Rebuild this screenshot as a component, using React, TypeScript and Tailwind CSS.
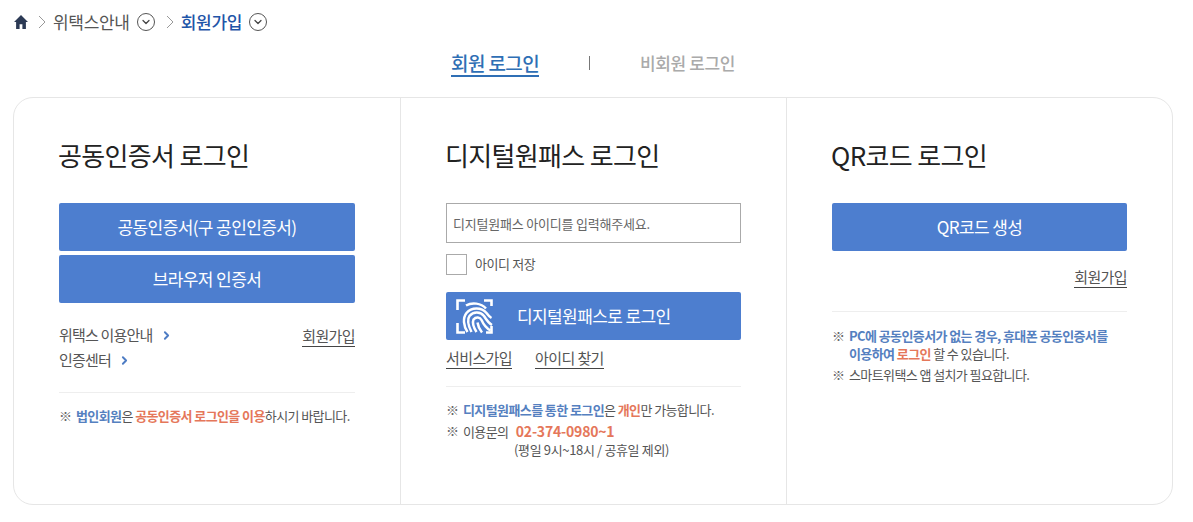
import React from "react";
import { ChevronDown, ChevronRight } from "lucide-react";

const KR = "font-['Noto_Sans_CJK_KR','Noto_Sans',sans-serif]";

const CircleDown = () => (
  <span className="flex h-[18px] w-[18px] items-center justify-center rounded-full border border-[#555]">
    <ChevronDown className="h-3 w-3 text-[#444]" strokeWidth={2.5} />
  </span>
);

const Crumb = () => (
  <svg width="8" height="14" viewBox="0 0 8 14" fill="none" stroke="#999" strokeWidth="1">
    <path d="M1 1l6 6-6 6" />
  </svg>
);

const FingerprintIcon = () => (
  <svg width="37" height="35" viewBox="0 0 37 35" fill="none" stroke="#fff">
    <path d="M9 1.5H1.5V11M28 1.5h7.5V7M1.500 24v9.500H9M35.500 27v6.500H30" strokeWidth="2.600" />
    <g strokeWidth="2.500">
      <path d="M10 6.500c6-3.500 15-2.500 20 3" />
      <path d="M11.500 33c-4-6-5-14-1-19 5-6 15-6 20 0 1.500 2 3 4 5 5" />
      <path d="M15.500 33c-3-6-5-12-2-16 4-5 11-4.500 14.500 0 2.500 4 4.500 7 8 9" />
      <path d="M20.500 33c-2.500-4-4.500-9-3-12.500 2.500-3 6.500-2.500 8 .5 2 4.500 4.500 8 9 10.500" />
      <path d="M26 33.500c-2-2.500-4-6-4.500-10" />
    </g>
  </svg>
);

const Note = ({ children }: { children: React.ReactNode }) => (
  <div className="flex text-[13px] leading-[18px] tracking-[-0.6px] text-[#555]">
    <span className="w-[17px] shrink-0 text-[#666]">※</span>
    <div>{children}</div>
  </div>
);

const Blue = ({ children }: { children: React.ReactNode }) => (
  <b className="font-semibold text-[#5580c0]">{children}</b>
);
const Red = ({ children }: { children: React.ReactNode }) => (
  <b className="font-semibold text-[#e5775a]">{children}</b>
);

const BlueButton = ({ children }: { children: React.ReactNode }) => (
  <button className="flex h-12 w-full items-center justify-center rounded-[2px] bg-[#4d7ecf] text-[17px] tracking-[-0.6px] text-white">
    {children}
  </button>
);

const LinkText = ({ children }: { children: React.ReactNode }) => (
  <a className="border-b border-[#444] text-[15px] leading-[20px] tracking-[-0.6px] text-[#555]">{children}</a>
);

const Guide = ({ label }: { label: string }) => (
  <div className="flex h-[25px] items-center gap-[7px] text-[15px] tracking-[-0.8px] text-[#555]">
    {label}
    <ChevronRight className="h-[13px] w-[13px] text-[#4d7cc4]" strokeWidth={3.5} />
  </div>
);

const Heading = ({ children }: { children: React.ReactNode }) => (
  <h2 className="-ml-px h-[68px] text-[26px] leading-[40px] tracking-[-0.65px] text-[#222]">{children}</h2>
);

export default function App() {
  return (
    <div className={`h-[522px] w-[1193px] overflow-hidden bg-white ${KR}`}>
      <nav className="flex h-[44px] items-center pl-[14px] text-[17px] tracking-[-0.3px] text-[#555]">
        <svg width="14" height="14" viewBox="0 0 16 16" preserveAspectRatio="none" fill="#2c3a55">
          <path d="M8 0L0 8h2.400v8h4v-5.500h3.200V16h4V8H16z" />
        </svg>
        <span className="ml-[10px] mr-[7px] flex"><Crumb /></span>
        <span>위택스안내</span>
        <span className="ml-[7px]"><CircleDown /></span>
        <span className="ml-[11px] mr-[7px] flex"><Crumb /></span>
        <span className="font-medium text-[#1f55a8]">회원가입</span>
        <span className="ml-[7px]"><CircleDown /></span>
      </nav>

      <div className="flex h-[53px] items-start justify-center pr-[7px] pt-[6px] text-[17px] font-medium tracking-[-0.4px]">
        <a className="border-b-2 border-[#2f6fb5] text-[19px] leading-[25px] tracking-[-0.6px] text-[#2f6fb5]">회원 로그인</a>
        <span className="mx-[50px] mt-[6px] h-[14px] w-px bg-[#777]" />
        <a className="leading-[25px] text-[#aaa]">비회원 로그인</a>
      </div>

      <div className="mx-[13px] flex h-[408px] w-[1160px] rounded-[20px] border border-[#e6e6e6]">
        <section className="w-[387px] border-r border-[#e6e6e6] pl-[45px] pr-[45px] pt-[37px]">
          <Heading>공동인증서 로그인</Heading>
          <div className="flex flex-col gap-1">
            <BlueButton>공동인증서(구 공인인증서)</BlueButton>
            <BlueButton>브라우저 인증서</BlueButton>
          </div>
          <div className="mt-[20px] flex justify-between">
            <div>
              <Guide label="위택스 이용안내" />
              <Guide label="인증센터" />
            </div>
            <div><LinkText>회원가입</LinkText></div>
          </div>
          <div className="mt-[19px] border-t border-[#eee] pt-[14px]">
            <Note><Blue>법인회원</Blue>은 <Red>공동인증서 로그인을 이용</Red>하시기 바랍니다.</Note>
          </div>
        </section>

        <section className="w-[386px] border-r border-[#e6e6e6] pl-[45px] pr-[45px] pt-[37px]">
          <Heading>디지털원패스 로그인</Heading>
          <input
            readOnly
            placeholder="디지털원패스 아이디를 입력해주세요."
            className="h-10 w-full border border-[#aaa] px-[6px] text-[13px] tracking-[-0.2px] placeholder:text-[#666]"
          />
          <label className="mt-[10px] flex h-[22px] items-center gap-[8px] text-[13px] tracking-[-0.4px] text-[#555]">
            <span className="h-[21px] w-[21px] border border-[#aaa]" />
            아이디 저장
          </label>
          <button className="mt-[17px] flex h-12 w-full items-center rounded-[2px] bg-[#4d7ecf] pl-[10px] text-[17px] tracking-[-0.6px] text-white">
            <FingerprintIcon />
            <span className="ml-[24px]">디지털원패스로 로그인</span>
          </button>
          <div className="mt-[8px] flex gap-[23px]">
            <LinkText>서비스가입</LinkText>
            <LinkText>아이디 찾기</LinkText>
          </div>
          <div className="mt-[17px] flex flex-col gap-[3px] border-t border-[#eee] pt-[14px]">
            <Note><Blue>디지털원패스를 통한 로그인</Blue>은 <Red>개인</Red>만 가능합니다.</Note>
            <Note>
              이용문의 <span className="ml-[5px] text-[14px] font-semibold tracking-[-0.2px] text-[#e5775a]">02-374-0980~1</span>
              <div className="pl-[51px] tracking-[-0.35px]">(평일 9시~18시 / 공휴일 제외)</div>
            </Note>
          </div>
        </section>

        <section className="flex-1 pl-[45px] pr-[45px] pt-[37px]">
          <Heading>QR코드 로그인</Heading>
          <BlueButton>QR코드 생성</BlueButton>
          <div className="mt-[16px] flex justify-end"><LinkText>회원가입</LinkText></div>
          <div className="mt-[23px] flex flex-col gap-[3px] border-t border-[#eee] pt-[15px]">
            <Note><Blue>PC에 공동인증서가 없는 경우, 휴대폰 공동인증서를<br />이용하여</Blue> <Red>로그인</Red> 할 수 있습니다.</Note>
            <Note>스마트위택스 앱 설치가 필요합니다.</Note>
          </div>
        </section>
      </div>
    </div>
  );
}
